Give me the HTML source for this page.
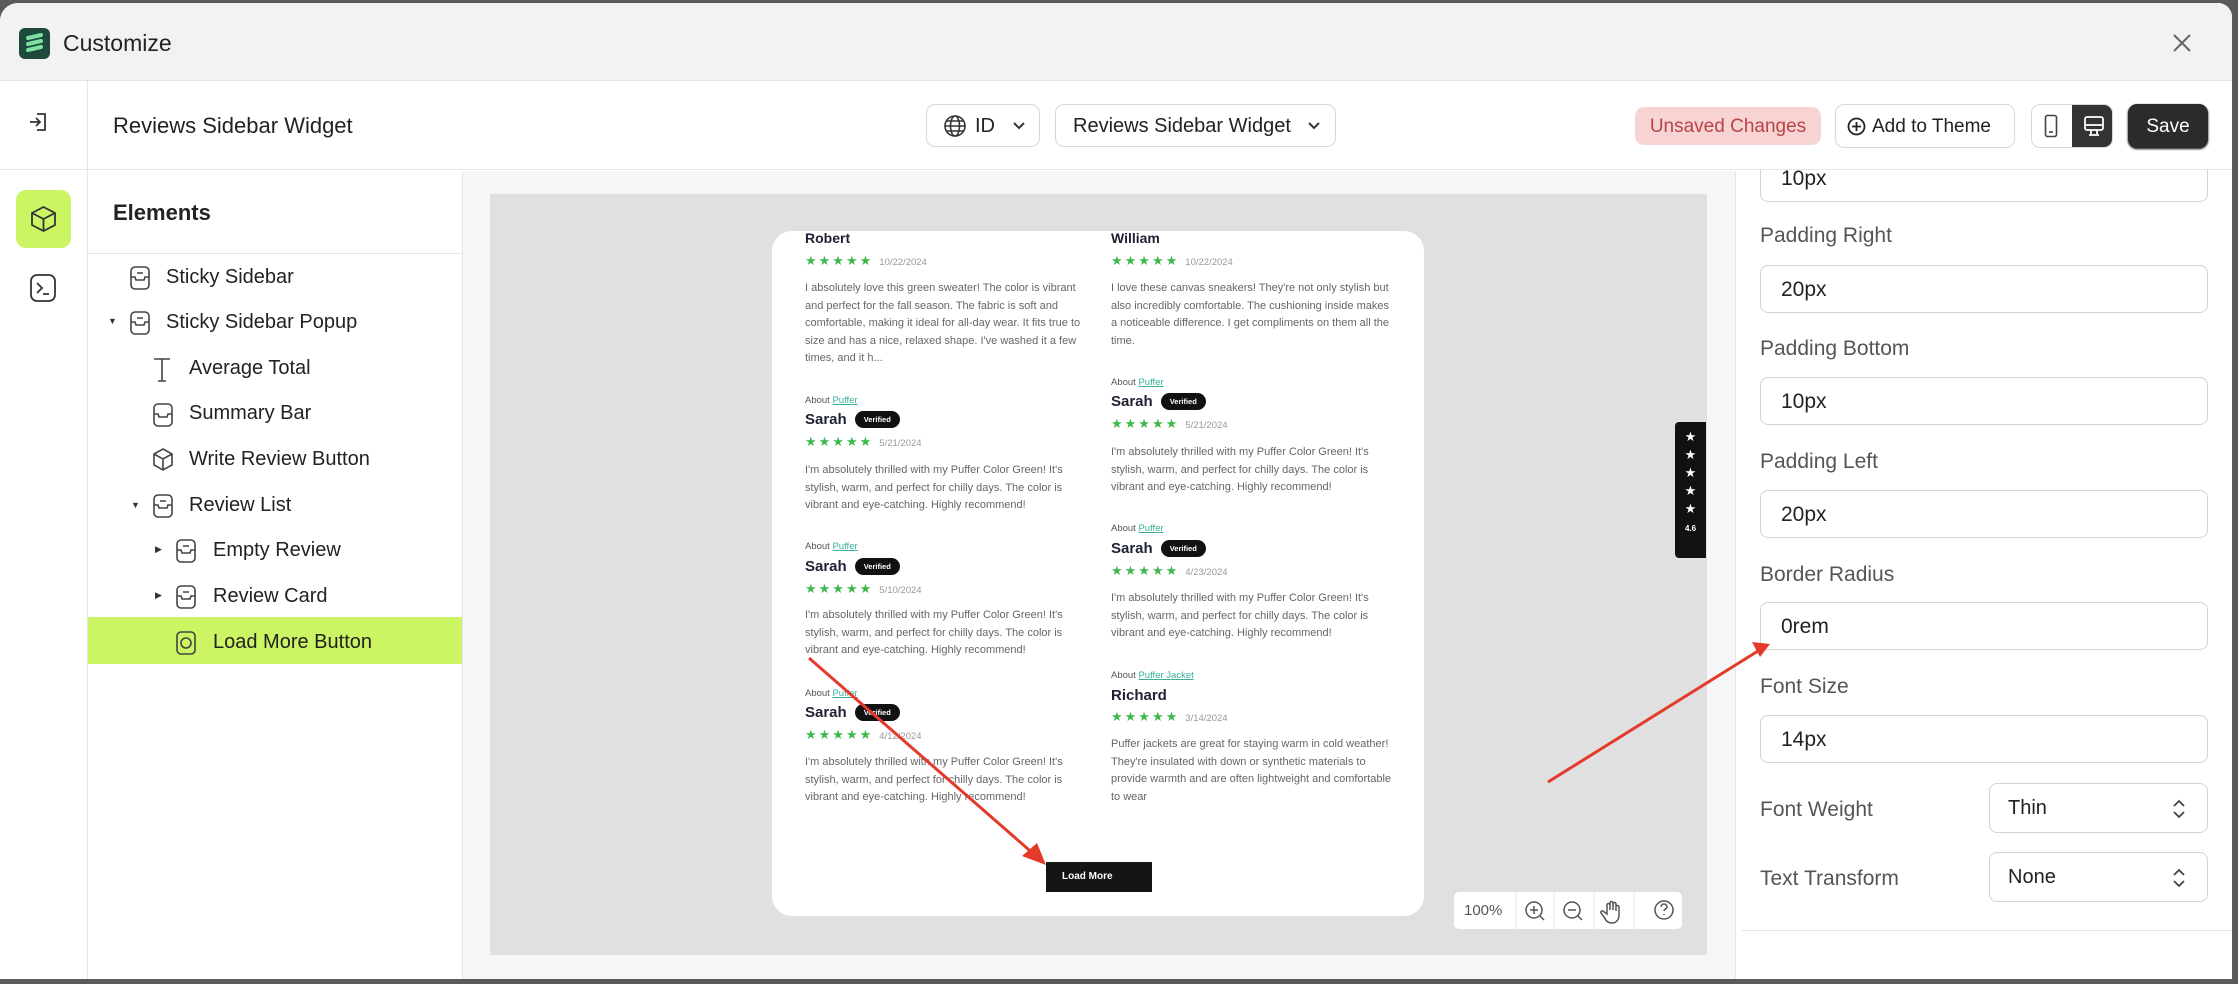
<!DOCTYPE html>
<html><head><meta charset="utf-8"><style>
*{box-sizing:border-box;margin:0;padding:0}
body{width:2238px;height:984px;background:#5a5a5a;font-family:"Liberation Sans",sans-serif;overflow:hidden;position:relative}
.win{position:absolute;left:0;top:3px;width:2232px;height:976px;background:#fff;border-radius:18px 14px 0 0;overflow:hidden}
.a{position:absolute}
.title{left:0;top:0;width:100%;height:78px;background:#f2f2f2;border-bottom:1px solid #e2e2e2}
.lbl{font-size:21px;color:#555}
.inp{position:absolute;left:1760px;width:448px;height:48px;border:1.5px solid #d4d4d4;border-radius:8px;font-size:21px;color:#222;padding:12px 0 0 20px;background:#fff}
.sel{position:absolute;left:1989px;width:219px;height:50px;border:1.5px solid #d4d4d4;border-radius:8px;font-size:20px;color:#222;padding:13px 0 0 18px}
.item{position:absolute;font-size:20px;color:#222}
.rv{position:absolute;font-size:11px;color:#666;line-height:17.6px;width:278px}
.nm{position:absolute;font-size:15px;font-weight:bold;color:#1f2235}
.ab{position:absolute;font-size:9.5px;color:#555}
.ab span{color:#3aaf9a;text-decoration:underline}
.st{position:absolute;font-size:13px;color:#3cb94a;letter-spacing:2px}
.st span{color:#999;font-size:9.5px;letter-spacing:0;margin-left:6px}
.vf{display:inline-block;background:#111;color:#fff;font-size:7.5px;border-radius:9px;padding:4px 9px;margin-left:8px;vertical-align:2px;font-weight:bold}
</style></head><body>
<div class="win">

<div class="a" style="left:1735px;top:168px;width:1px;height:810px;background:#e6e6e6"></div>
<div class="inp" style="top:151px">10px</div>
<div class="a lbl" style="left:1760px;top:221px">Padding Right</div>
<div class="inp" style="top:262px">20px</div>
<div class="a lbl" style="left:1760px;top:334px">Padding Bottom</div>
<div class="inp" style="top:374px">10px</div>
<div class="a lbl" style="left:1760px;top:447px">Padding Left</div>
<div class="inp" style="top:487px">20px</div>
<div class="a lbl" style="left:1760px;top:560px">Border Radius</div>
<div class="inp" style="top:599px">0rem</div>
<div class="a lbl" style="left:1760px;top:672px">Font Size</div>
<div class="inp" style="top:712px">14px</div>
<div class="a lbl" style="left:1760px;top:795px">Font Weight</div>
<div class="sel" style="top:780px">Thin</div>
<div class="a lbl" style="left:1760px;top:864px">Text Transform</div>
<div class="sel" style="top:849px">None</div>
<svg class="a" style="left:2172px;top:796px" width="14" height="20" fill="none" stroke="#444" stroke-width="1.8"><path d="M2 7l5-5 5 5M2 13l5 5 5-5"/></svg>
<svg class="a" style="left:2172px;top:865px" width="14" height="20" fill="none" stroke="#444" stroke-width="1.8"><path d="M2 7l5-5 5 5M2 13l5 5 5-5"/></svg>
<div class="a" style="left:1742px;top:927px;width:490px;height:1px;background:#e3e3e3"></div>

<div class="a title"></div>
<div class="a" style="left:19px;top:25px;width:31px;height:31px;border-radius:6px;background:#1d4a3c"><svg width="31" height="31"><path d="M9 10 L22 7 M9 16 L22 13 M9 22 L22 19" stroke="#7ee0a4" stroke-width="4" stroke-linecap="round"/></svg></div>
<div class="a" style="left:63px;top:27px;font-size:23px;color:#222">Customize</div>
<svg class="a" style="left:2172px;top:30px" width="20" height="20"><path d="M2 2L18 18M18 2L2 18" stroke="#666" stroke-width="2"/></svg>

<div class="a" style="left:0;top:78px;width:100%;height:89px;border-bottom:1px solid #e6e6e6;background:#fff"></div>
<div class="a" style="left:87px;top:78px;width:1px;height:900px;background:#e6e6e6"></div>
<svg class="a" style="left:28px;top:108px" width="22" height="22" fill="none" stroke="#333" stroke-width="1.8"><path d="M9 3h8v16H9M2 11h10M8 7l4 4-4 4"/></svg>
<div class="a" style="left:113px;top:110px;font-size:22px;color:#222">Reviews Sidebar Widget</div>
<div class="a" style="left:926px;top:101px;width:114px;height:43px;border:1.5px solid #d8d8d8;border-radius:9px"></div>
<svg class="a" style="left:943px;top:111px" width="24" height="24" fill="none" stroke="#333" stroke-width="1.6"><circle cx="12" cy="12" r="10"/><ellipse cx="12" cy="12" rx="4.5" ry="10"/><path d="M2 12h20M4 7h16M4 17h16"/></svg>
<div class="a" style="left:975px;top:112px;font-size:20px;color:#222">ID</div>
<svg class="a" style="left:1012px;top:118px" width="14" height="10" fill="none" stroke="#333" stroke-width="2"><path d="M2 2l5 5 5-5"/></svg>
<div class="a" style="left:1055px;top:101px;width:281px;height:43px;border:1.5px solid #d8d8d8;border-radius:9px"></div>
<div class="a" style="left:1073px;top:112px;font-size:20px;color:#222">Reviews Sidebar Widget</div>
<svg class="a" style="left:1307px;top:118px" width="14" height="10" fill="none" stroke="#333" stroke-width="2"><path d="M2 2l5 5 5-5"/></svg>
<div class="a" style="left:1635px;top:104px;width:186px;height:38px;background:#f7d3d3;border-radius:9px;color:#b94444;font-size:19px;text-align:center;padding-top:9px">Unsaved Changes</div>
<div class="a" style="left:1835px;top:101px;width:180px;height:44px;border:1.5px solid #d8d8d8;border-radius:9px;font-size:19px;color:#222;padding:11px 0 0 36px">Add to Theme</div>
<svg class="a" style="left:1847px;top:114px" width="19" height="19" fill="none" stroke="#222" stroke-width="1.8"><circle cx="9.5" cy="9.5" r="8"/><path d="M9.5 5v9M5 9.5h9"/></svg>
<div class="a" style="left:2031px;top:101px;width:82px;height:44px;border:1.5px solid #d8d8d8;border-radius:9px;overflow:hidden"><div style="position:absolute;left:40px;top:0;width:42px;height:44px;background:#333"></div></div>
<svg class="a" style="left:2044px;top:111px" width="14" height="24" fill="none" stroke="#444" stroke-width="1.6"><rect x="1.5" y="1.5" width="11" height="21" rx="2"/><path d="M5 18h4"/></svg>
<svg class="a" style="left:2083px;top:112px" width="22" height="22" fill="none" stroke="#fff" stroke-width="1.8"><rect x="2" y="2" width="18" height="13" rx="2"/><path d="M2 10h18M8 15v4M14 15v4M6 20h10"/></svg>
<div class="a" style="left:2128px;top:101px;width:80px;height:44px;background:#2b2b2b;border-radius:9px;color:#fff;font-size:19px;text-align:center;padding-top:12px;box-shadow:0 1px 2px #000">Save</div>

<div class="a" style="left:16px;top:187px;width:55px;height:58px;background:#cbf562;border-radius:10px"></div>
<svg class="a" style="left:30px;top:202px" width="27" height="28" fill="none" stroke="#333" stroke-width="1.8"><path d="M13.5 2L25 8v12l-11.5 6L2 20V8z M2 8l11.5 6L25 8 M13.5 14v12"/></svg>
<svg class="a" style="left:29px;top:270px" width="28" height="30" fill="none" stroke="#333" stroke-width="1.8"><rect x="2" y="2" width="24" height="26" rx="6"/><path d="M8 10l5 5-5 5M14 21h6"/></svg>

<div class="a" style="left:462px;top:168px;width:1px;height:810px;background:#e6e6e6"></div>
<div class="a" style="left:113px;top:197px;font-size:22px;font-weight:bold;color:#222">Elements</div>
<div class="a" style="left:88px;top:250px;width:374px;height:1px;background:#e6e6e6"></div>
<div class="a" style="left:88px;top:614px;width:374px;height:47px;background:#cbf562"></div>
<div class="item" style="left:166px;top:263px">Sticky Sidebar</div>
<div class="item" style="left:166px;top:308px">Sticky Sidebar Popup</div>
<div class="item" style="left:189px;top:354px">Average Total</div>
<div class="item" style="left:189px;top:399px">Summary Bar</div>
<div class="item" style="left:189px;top:445px">Write Review Button</div>
<div class="item" style="left:189px;top:491px">Review List</div>
<div class="item" style="left:213px;top:536px">Empty Review</div>
<div class="item" style="left:213px;top:582px">Review Card</div>
<div class="item" style="left:213px;top:628px">Load More Button</div>
<div class="a" style="left:108px;top:313px;font-size:9px;color:#333">▼</div>
<div class="a" style="left:131px;top:497px;font-size:9px;color:#333">▼</div>
<div class="a" style="left:155px;top:541px;font-size:9px;color:#333">▶</div>
<div class="a" style="left:155px;top:587px;font-size:9px;color:#333">▶</div>
<svg class="a" style="left:0;top:0" width="470" height="700" fill="none" stroke="#444" stroke-width="1.6">
<rect x="131" y="264" width="18" height="22" rx="4"/><path d="M131 274h4l1 3h8l1-3h4M137 270h6"/>
<rect x="131" y="309" width="18" height="22" rx="4"/><path d="M131 319h4l1 3h8l1-3h4M137 315h6"/>
<path d="M154 356h16M162 356v22M158 378h8"/>
<rect x="154" y="401" width="18" height="22" rx="4"/><path d="M154 411h4l1 3h8l1-3h4"/>
<path d="M163 446l9 5v11l-9 5-9-5v-11z M154 451l9 5 9-5 M163 456v11"/>
<rect x="154" y="492" width="18" height="22" rx="4"/><path d="M154 502h4l1 3h8l1-3h4M160 498h6"/>
<rect x="177" y="537" width="18" height="22" rx="4"/><path d="M177 547h4l1 3h8l1-3h4M183 543h6"/>
<rect x="177" y="583" width="18" height="22" rx="4"/><path d="M177 593h4l1 3h8l1-3h4M183 589h6"/>
<rect x="177" y="629" width="18" height="22" rx="4"/><circle cx="186" cy="640" r="5"/>
</svg>

<div class="a" style="left:463px;top:168px;width:1272px;height:810px;background:#f5f6f8"></div>
<div class="a" style="left:490px;top:191px;width:1217px;height:761px;background:#e0e0e0"></div>
<div class="a" style="left:772px;top:228px;width:652px;height:685px;background:#fff;border-radius:20px"></div>
<div class="a" style="left:1675px;top:419px;width:31px;height:136px;background:#111;border-radius:4px 0 0 4px;color:#fff;font-size:13px;text-align:center;line-height:18px;padding-top:6px">★<br>★<br>★<br>★<br>★<br><span style="font-size:8px;font-weight:bold">4.6</span></div>
<div class="a" style="left:1454px;top:889px;width:228px;height:37px;background:#fff;border-radius:5px;font-size:15px;color:#555;padding:10px 0 0 10px">100%</div>
<svg class="a" style="left:1454px;top:889px" width="228" height="37" fill="none" stroke="#555" stroke-width="1.5">
<path d="M62 0v37M100 0v37M140 0v37M180 0v37" stroke="#eee"/>
<circle cx="80" cy="18" r="8"/><path d="M86 24l4 4M76 18h8M80 14v8"/>
<circle cx="118" cy="18" r="8"/><path d="M124 24l4 4M114 18h8"/>
<path d="M153 22v-9a1.5 1.5 0 013 0v5-7a1.5 1.5 0 013 0v7-6a1.5 1.5 0 013 0v7-4a1.5 1.5 0 013 0v8c0 5-3 8-7 8s-6-2-8-6l-3-4a1.5 1.5 0 012-2z"/>
<circle cx="210" cy="18" r="9"/><path d="M207 15a3 3 0 116 0c0 2-3 2-3 4M210 22v1"/>
</svg>

<div class="nm" style="left:805px;top:227px;font-size:14px">Robert</div>
<div class="st" style="left:805px;top:250px">★★★★★<span>10/22/2024</span></div>
<div class="rv" style="left:805px;top:277px">I absolutely love this green sweater! The color is vibrant and perfect for the fall season. The fabric is soft and comfortable, making it ideal for all-day wear. It fits true to size and has a nice, relaxed shape. I've washed it a few times, and it h...</div>
<div class="ab" style="left:805px;top:392px">About <span>Puffer</span></div>
<div class="nm" style="left:805px;top:408px">Sarah<span class="vf">Verified</span></div>
<div class="st" style="left:805px;top:431px">★★★★★<span>5/21/2024</span></div>
<div class="rv" style="left:805px;top:459px;width:262px">I'm absolutely thrilled with my Puffer Color Green! It's stylish, warm, and perfect for chilly days. The color is vibrant and eye-catching. Highly recommend!</div>
<div class="ab" style="left:805px;top:538px">About <span>Puffer</span></div>
<div class="nm" style="left:805px;top:555px">Sarah<span class="vf">Verified</span></div>
<div class="st" style="left:805px;top:578px">★★★★★<span>5/10/2024</span></div>
<div class="rv" style="left:805px;top:604px;width:262px">I'm absolutely thrilled with my Puffer Color Green! It's stylish, warm, and perfect for chilly days. The color is vibrant and eye-catching. Highly recommend!</div>
<div class="ab" style="left:805px;top:685px">About <span>Puffer</span></div>
<div class="nm" style="left:805px;top:701px">Sarah<span class="vf">Verified</span></div>
<div class="st" style="left:805px;top:724px">★★★★★<span>4/12/2024</span></div>
<div class="rv" style="left:805px;top:751px;width:262px">I'm absolutely thrilled with my Puffer Color Green! It's stylish, warm, and perfect for chilly days. The color is vibrant and eye-catching. Highly recommend!</div>
<div class="nm" style="left:1111px;top:227px;font-size:14px">William</div>
<div class="st" style="left:1111px;top:250px">★★★★★<span>10/22/2024</span></div>
<div class="rv" style="left:1111px;top:277px;width:282px">I love these canvas sneakers! They're not only stylish but also incredibly comfortable. The cushioning inside makes a noticeable difference. I get compliments on them all the time.</div>
<div class="ab" style="left:1111px;top:374px">About <span>Puffer</span></div>
<div class="nm" style="left:1111px;top:390px">Sarah<span class="vf">Verified</span></div>
<div class="st" style="left:1111px;top:413px">★★★★★<span>5/21/2024</span></div>
<div class="rv" style="left:1111px;top:441px;width:262px">I'm absolutely thrilled with my Puffer Color Green! It's stylish, warm, and perfect for chilly days. The color is vibrant and eye-catching. Highly recommend!</div>
<div class="ab" style="left:1111px;top:520px">About <span>Puffer</span></div>
<div class="nm" style="left:1111px;top:537px">Sarah<span class="vf">Verified</span></div>
<div class="st" style="left:1111px;top:560px">★★★★★<span>4/23/2024</span></div>
<div class="rv" style="left:1111px;top:587px;width:262px">I'm absolutely thrilled with my Puffer Color Green! It's stylish, warm, and perfect for chilly days. The color is vibrant and eye-catching. Highly recommend!</div>
<div class="ab" style="left:1111px;top:667px">About <span>Puffer Jacket</span></div>
<div class="nm" style="left:1111px;top:684px">Richard</div>
<div class="st" style="left:1111px;top:706px">★★★★★<span>3/14/2024</span></div>
<div class="rv" style="left:1111px;top:733px;width:288px">Puffer jackets are great for staying warm in cold weather! They're insulated with down or synthetic materials to provide warmth and are often lightweight and comfortable to wear</div>
<div class="a" style="left:1046px;top:859px;width:106px;height:30px;background:#151515;color:#fff;font-size:10px;font-weight:bold;padding:9px 0 0 16px">Load More</div>

<svg class="a" style="left:0;top:0" width="2232" height="980">
<path d="M809 655L1036 853" stroke="#e53a2a" stroke-width="3"/>
<path d="M1046 862L1022 853L1037 840z" fill="#e53a2a"/>
<path d="M1548 779L1758 648" stroke="#e53a2a" stroke-width="3"/>
<path d="M1770 641L1752 639L1760 654z" fill="#e53a2a"/>
</svg>
</div>
</body></html>
